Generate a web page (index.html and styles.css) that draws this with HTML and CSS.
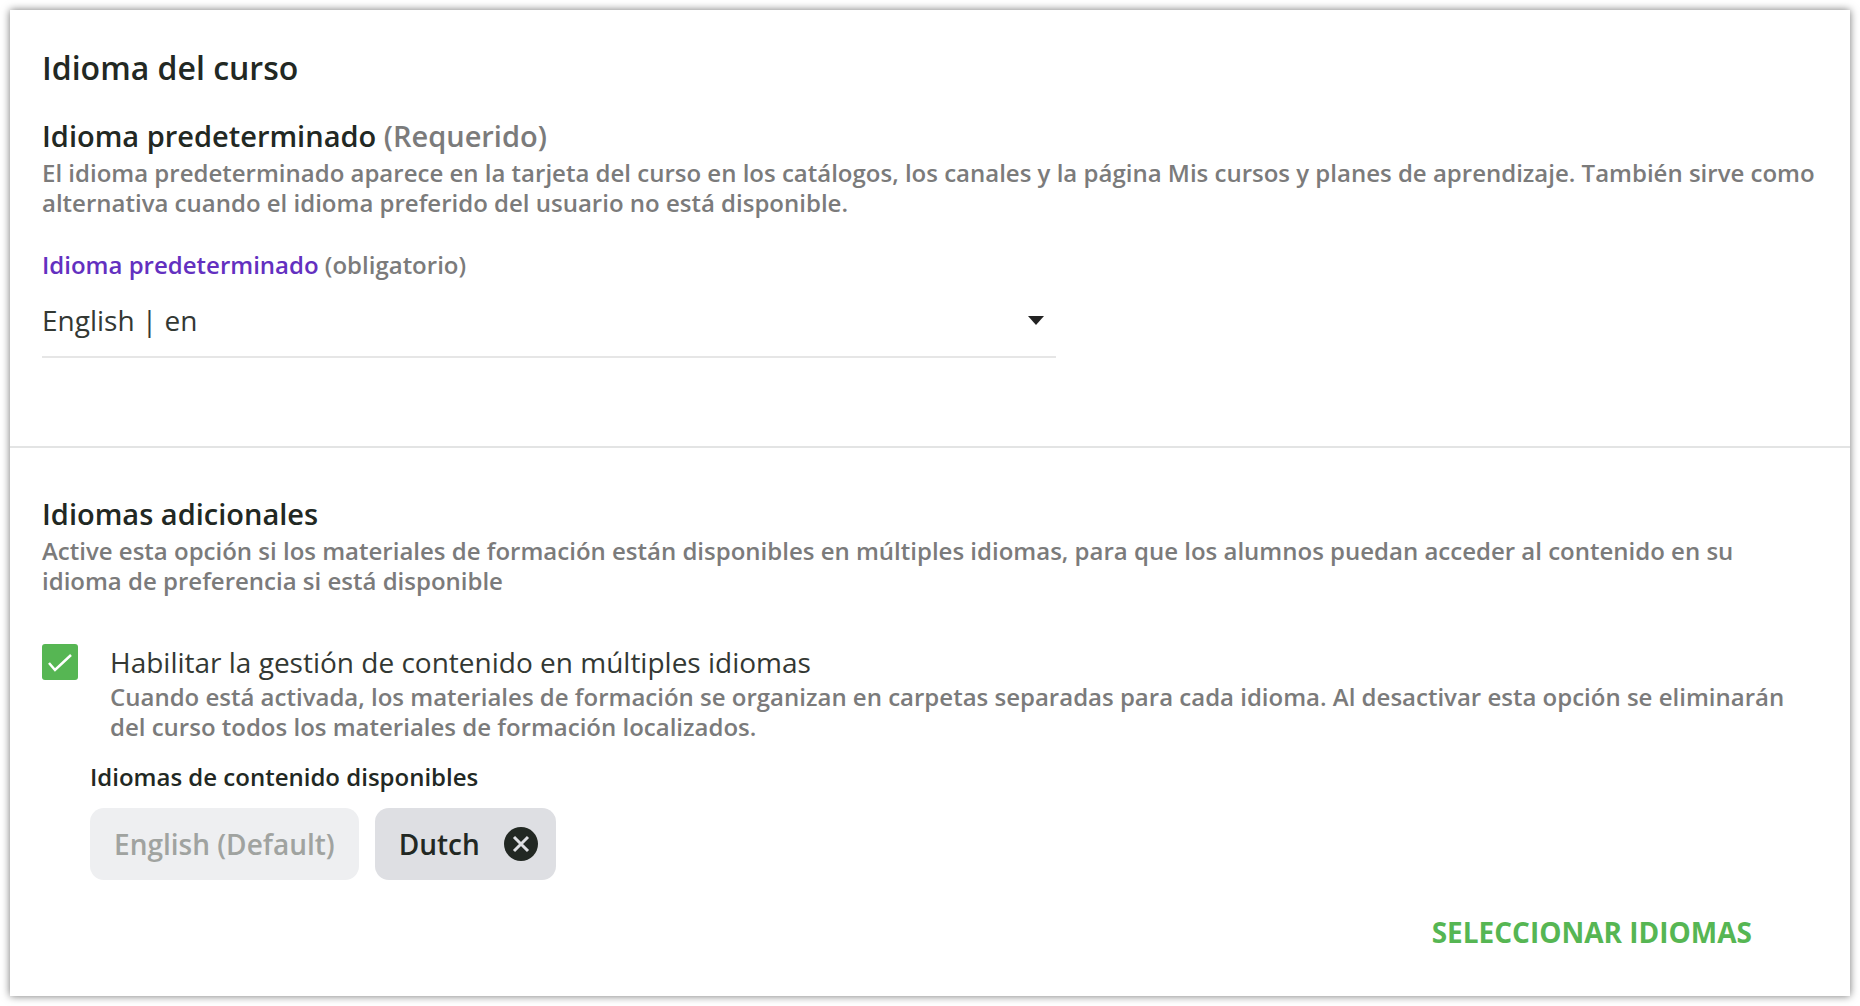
FILE: index.html
```
<!DOCTYPE html>
<html lang="es">
<head>
<meta charset="utf-8">
<title>Idioma del curso</title>
<link rel="stylesheet" href="styles.css">
</head>
<body>
<main class="card">
  <section class="section section-default">
    <h1>Idioma del curso</h1>
    <h2>Idioma predeterminado <span class="hint">(Requerido)</span></h2>
    <p class="desc">El idioma predeterminado aparece en la tarjeta del curso en los catálogos, los canales y la página Mis cursos y planes de aprendizaje. También sirve como alternativa cuando el idioma preferido del usuario no está disponible.</p>
    <div class="field">
      <label for="default-lang">Idioma predeterminado <span class="hint">(obligatorio)</span></label>
      <div class="select-wrap">
        <select id="default-lang">
          <option>English | en</option>
        </select>
        <svg class="arrow" viewBox="0 0 16 9" aria-hidden="true"><path d="M0 0h16L8 9z"/></svg>
      </div>
    </div>
  </section>

  <section class="section section-extra">
    <h2>Idiomas adicionales</h2>
    <p class="desc">Active esta opción si los materiales de formación están disponibles en múltiples idiomas, para que los alumnos puedan acceder al contenido en su idioma de preferencia si está disponible</p>
    <div class="option">
      <span class="check">
        <input type="checkbox" id="multi-lang" checked>
        <svg viewBox="0 0 36 36" aria-hidden="true"><path d="M7 19l6 7L29 11"/></svg>
      </span>
      <div class="option-text">
        <label for="multi-lang">Habilitar la gestión de contenido en múltiples idiomas</label>
        <p class="desc">Cuando está activada, los materiales de formación se organizan en carpetas separadas para cada idioma. Al desactivar esta opción se eliminarán del curso todos los materiales de formación localizados.</p>
      </div>
    </div>
    <div class="languages">
      <h3>Idiomas de contenido disponibles</h3>
      <ul class="chips">
        <li class="chip chip-disabled">English (Default)</li>
        <li class="chip">Dutch
          <button type="button" class="remove" aria-label="Eliminar Dutch">
            <svg viewBox="0 0 34 34" aria-hidden="true"><circle cx="17" cy="17" r="17"/><path d="M10 10l14 14M24 10L10 24"/></svg>
          </button>
        </li>
      </ul>
    </div>
    <div class="actions">
      <button type="button" class="select-btn">SELECCIONAR IDIOMAS</button>
    </div>
  </section>
</main>
</body>
</html>
```
FILE: styles.css
```
* {box-sizing: border-box;}
body {
	margin: 0;
	padding: 10px;
	background: #fff;
	color: #222823;
	font-family: "Open Sans", sans-serif;
	font-size: 28px;
	line-height: 36px;
}
h1, h2, h3, p, ul {margin: 0; padding: 0;}
h1 {font-size: 32px; font-weight: 600; line-height: 40px;}
h2 {font-size: 29px; font-weight: 600;}
h3 {font-size: 24px; font-weight: 600; line-height: 30px;}

.card {background: #fff; box-shadow: 0 0 8px rgba(0,0,0,0.55);}
.section {padding: 0 32px;}
.section-default {padding-top: 38px; padding-bottom: 88px; border-bottom: 2px solid #e3e4e4;}
.section-default h2 {margin-top: 30px;}
.section-extra {padding-top: 48px; padding-bottom: 28px;}

.hint {color: #7b7b7b;}
.desc {margin-top: 4px; color: #7b7b7b; font-size: 24px; font-weight: 600; line-height: 30px;}

.field {width: 1014px; max-width: 100%; margin-top: 32px;}
.field label {display: block; color: #6330c0; font-size: 24px; font-weight: 600; line-height: 30px;}
.select-wrap {position: relative; margin-top: 12px; border-bottom: 2px solid #e6e6e6;}
select {
	display: block;
	width: 100%;
	height: 64px;
	padding: 0 0 8px;
	border: 0;
	background: none;
	color: #333833;
	font: 400 28px/36px "Open Sans", sans-serif;
	appearance: none;
}
.arrow {position: absolute; right: 12px; top: 24px; width: 16px; height: 9px; fill: #222; pointer-events: none;}

.option {display: flex; gap: 32px; margin-top: 48px;}
.check {position: relative; flex: none; width: 36px; height: 36px;}
.check input {
	display: block;
	width: 36px;
	height: 36px;
	margin: 0;
	border-radius: 3px;
	background: #b5b5b5;
	appearance: none;
}
.check input:checked {background: #56b653;}
.check svg {position: absolute; left: 0; top: 0; fill: none; stroke: #fff; stroke-width: 2.5; pointer-events: none;}
.option-text label {display: block; color: #333833;}
.option-text .desc {margin-top: 2px;}

.languages {margin-top: 20px; padding-left: 48px;}
.chips {display: flex; flex-wrap: wrap; gap: 16px; margin-top: 16px; list-style: none;}
.chip {
	display: flex;
	align-items: center;
	gap: 24px;
	height: 72px;
	padding: 0 18px 0 24px;
	border-radius: 14px;
	background: #dedfe3;
	font-weight: 600;
}
.chip-disabled {padding-right: 24px; background: #eeeff1; color: #a0a3a0;}
.remove {width: 34px; height: 34px; padding: 0; border: 0; background: none; cursor: pointer;}
.remove svg {display: block; fill: #222823;}
.remove path {stroke: #dedfe3; stroke-width: 3;}

.actions {display: flex; justify-content: flex-end; margin-top: 16px; padding-right: 50px;}
.select-btn {
	height: 72px;
	padding: 0 16px;
	border: 0;
	background: none;
	color: #56b653;
	font: 700 28px/36px "Open Sans", sans-serif;
	cursor: pointer;
}
```
